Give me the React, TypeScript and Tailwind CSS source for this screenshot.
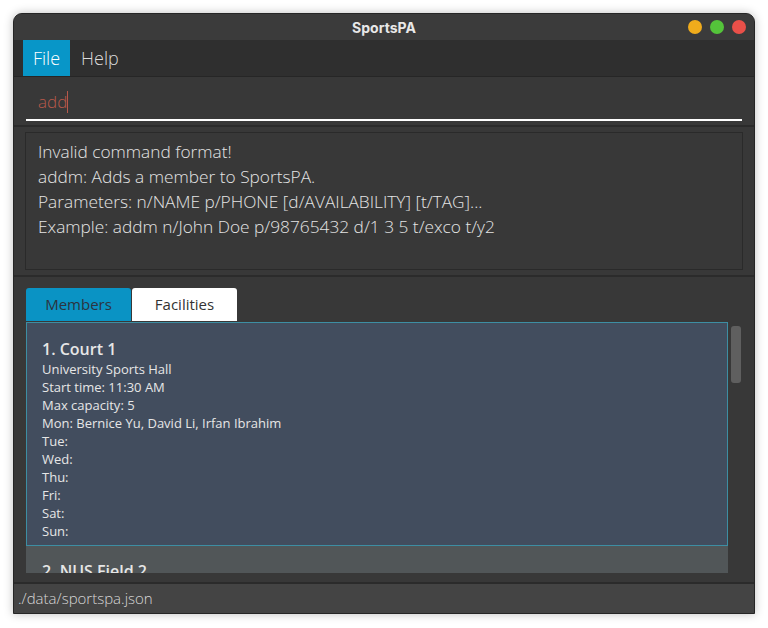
import React from "react";

const resultLines = [
  "Invalid command format!",
  "addm: Adds a member to SportsPA.",
  "Parameters: n/NAME p/PHONE [d/AVAILABILITY] [t/TAG]...",
  "Example: addm n/John Doe p/98765432 d/1 3 5 t/exco t/y2",
];

const facility = {
  name: "Court 1",
  location: "University Sports Hall",
  time: "11:30 AM",
  capacity: 5,
  days: [
    ["Mon", "Bernice Yu, David Li, Irfan Ibrahim"],
    ["Tue", ""],
    ["Wed", ""],
    ["Thu", ""],
    ["Fri", ""],
    ["Sat", ""],
    ["Sun", ""],
  ],
};

const App = () => {
  return (
    <div className="w-[768px] h-[628px] bg-white pt-[13px] pl-[13px] font-['Open_Sans',sans-serif]">
      <div className="w-[742px] h-[601px] flex flex-col bg-[#383838] rounded-t-[9px] overflow-hidden border border-[#262626] shadow-[0_0_10px_rgba(0,0,0,0.25)]">
        {/* title bar */}
        <div className="h-[26px] shrink-0 bg-[#3b3b3b] flex items-center relative">
          <div className="flex-1 text-center text-[14px] font-bold text-[#e8e8e8] font-['Inter',sans-serif]">SportsPA</div>
          <div className="absolute right-[8px] top-[6px] flex gap-[8px]">
            <div className="w-[14px] h-[14px] rounded-full bg-[#f0ac1c]" />
            <div className="w-[14px] h-[14px] rounded-full bg-[#54c43a]" />
            <div className="w-[14px] h-[14px] rounded-full bg-[#ea5049]" />
          </div>
        </div>
        {/* menu bar */}
        <div className="h-[36px] shrink-0 bg-[#2f2f2f] flex pl-[9px] text-[18px] font-light">
          <div className="bg-[#0896c8] text-white px-[10px] flex items-center">File</div>
          <div className="text-[#dcdcdc] px-[11px] flex items-center">Help</div>
        </div>
        {/* command box */}
        <div className="h-[51px] shrink-0 border-t border-[#262626] border-b-2 border-b-[#2b2b2b] px-[12px] pt-[10px]">
          <div className="h-[34px] border-b-2 border-white flex items-center pb-[3px] pl-[12px] text-[17px] font-light text-[#b8584a]">
            add<span className="w-px h-[22px] bg-[#b8584a]" />
          </div>
        </div>
        {/* result display */}
        <div className="h-[150px] shrink-0 border-b-2 border-[#2b2b2b] px-[11px] py-[5px]">
          <div className="h-[138px] border border-[#2a2a2a] bg-[#383838] pl-[12px] pt-[6px] text-[17.3px] font-light text-[#e4e4e4] leading-[25px]">
            {resultLines.map((l) => (
              <div key={l}>{l}</div>
            ))}
          </div>
        </div>
        {/* list panel */}
        <div className="flex-1 min-h-0 flex flex-col pl-[12px] pr-[13px] pt-[11px] pb-[9px]">
          <div className="flex gap-px h-[33px] shrink-0 text-[15px]">
            <div className="w-[105px] bg-[#0a93c4] rounded-t-[3px] flex items-center justify-center text-[#2c3440]">Members</div>
            <div className="w-[105px] bg-white rounded-t-[3px] flex items-center justify-center text-[#333]">Facilities</div>
          </div>
          <div className="flex-1 min-h-0 flex gap-[3px] pt-px">
            <div className="w-[702px] flex flex-col overflow-hidden bg-[#515658]">
              <div className="bg-[#424d5e] border border-[#3d8ea3] pl-[15px] pt-[15px] pb-[5px] text-[#e6e6e6] shrink-0">
                <div className="text-[16px] font-semibold leading-[22px]">1. {facility.name}</div>
                <div className="text-[13px] leading-[18px]">
                  <div>{facility.location}</div>
                  <div>Start time: {facility.time}</div>
                  <div>Max capacity: {facility.capacity}</div>
                  {facility.days.map(([d, names]) => (
                    <div key={d}>
                      {d}:{names ? " " + names : ""}
                    </div>
                  ))}
                </div>
              </div>
              <div className="pl-[16px] pt-[14px] text-[16px] font-semibold text-[#e6e6e6] leading-[22px] shrink-0">
                2. NUS Field 2
              </div>
            </div>
            <div className="w-[10px] pt-[4px]">
              <div className="h-[57px] rounded-[3px] bg-[#5f5f5f]" />
            </div>
          </div>
        </div>
        {/* status bar */}
        <div className="h-[31px] shrink-0 bg-[#444444] border-t-2 border-[#2b2b2b] flex items-center pl-[4px] text-[15px] font-light text-[#d8d8d8]">
          ./data/sportspa.json
        </div>
      </div>
    </div>
  );
};

export default App;
